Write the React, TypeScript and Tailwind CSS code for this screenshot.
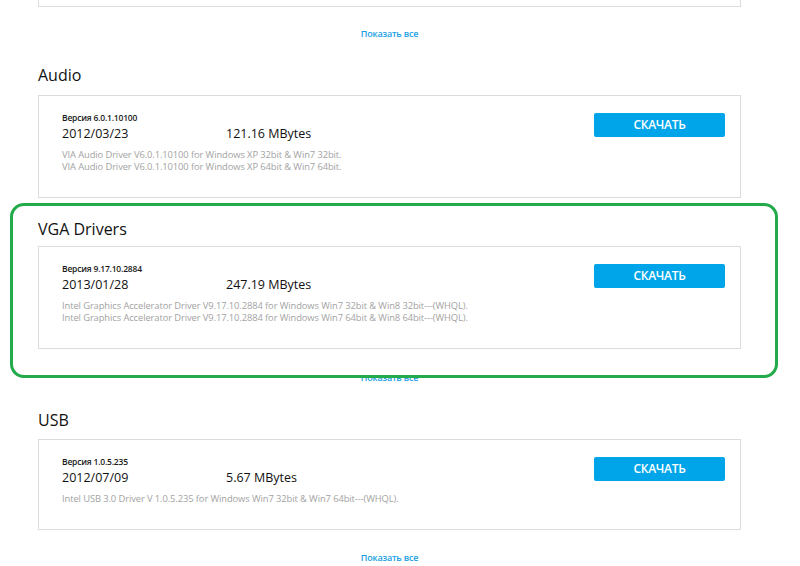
import React from "react";

type Driver = {
  version: string;
  date: string;
  size: string;
  desc: string[];
};

const font = { fontFamily: '"Open Sans", "Noto Sans", sans-serif' };

function ShowAll() {
  return (
    <div className="flex justify-center">
      <a className="text-[9px] leading-[14px] font-semibold text-[#19a0e3] tracking-[-0.2px] cursor-pointer">
        Показать все
      </a>
    </div>
  );
}

function DriverBox({ d }: { d: Driver }) {
  return (
    <div className="flex justify-between border border-[#dcdcdc] bg-white">
      <div className="pl-[23px] pt-[16px] pb-[24px]">
        <div className="text-[8.5px] leading-[12px] font-semibold text-[#1a1a1a] tracking-[-0.2px]">
          Версия {d.version}
        </div>
        <div className="mt-[2px] flex text-[12.5px] leading-[16px] text-[#111]">
          <span className="w-[164px]">{d.date}</span>
          <span>{d.size}</span>
        </div>
        <div className="mt-[7px] text-[9.4px] leading-[12px] text-[#a3a3a3] tracking-[-0.1px]">
          {d.desc.map((l, i) => (
            <div key={i}>{l}</div>
          ))}
        </div>
      </div>
      <div className="pt-[17px] pr-[15px]">
        <button className="w-[131px] h-[24px] rounded-[2px] bg-[#00a5e9] text-white text-[12px] font-semibold tracking-[-0.3px] flex items-center justify-center">
          СКАЧАТЬ
        </button>
      </div>
    </div>
  );
}

function Heading({ children }: { children: React.ReactNode }) {
  return <div className="text-[16px] leading-[22px] text-[#111]">{children}</div>;
}

export default function App() {
  const audio: Driver = {
    version: "6.0.1.10100",
    date: "2012/03/23",
    size: "121.16 MBytes",
    desc: [
      "VIA Audio Driver V6.0.1.10100 for Windows XP 32bit & Win7 32bit.",
      "VIA Audio Driver V6.0.1.10100 for Windows XP 64bit & Win7 64bit.",
    ],
  };
  const vga: Driver = {
    version: "9.17.10.2884",
    date: "2013/01/28",
    size: "247.19 MBytes",
    desc: [
      "Intel Graphics Accelerator Driver V9.17.10.2884 for Windows Win7 32bit & Win8 32bit---(WHQL).",
      "Intel Graphics Accelerator Driver V9.17.10.2884 for Windows Win7 64bit & Win8 64bit---(WHQL).",
    ],
  };
  const usb: Driver = {
    version: "1.0.5.235",
    date: "2012/07/09",
    size: "5.67 MBytes",
    desc: ["Intel USB 3.0 Driver V 1.0.5.235 for Windows Win7 32bit & Win7 64bit---(WHQL)."],
  };

  return (
    <div className="relative w-[800px] h-[566px] overflow-hidden bg-white" style={font}>
      <div className="ml-[38px] w-[703px] flex flex-col">
        <div className="h-[7px] border-x border-b border-[#dcdcdc]" />
        <div className="mt-[20px]">
          <ShowAll />
        </div>
        <div className="mt-[23px]">
          <Heading>Audio</Heading>
        </div>
        <div className="mt-[9px]">
          <DriverBox d={audio} />
        </div>
        <div className="mt-[20px]">
          <Heading>VGA Drivers</Heading>
        </div>
        <div className="mt-[6px]">
          <DriverBox d={vga} />
        </div>
        <div className="mt-[22px]">
          <ShowAll />
        </div>
        <div className="mt-[24px]">
          <Heading>USB</Heading>
        </div>
        <div className="mt-[8px]">
          <DriverBox d={usb} />
        </div>
        <div className="mt-[21px]">
          <ShowAll />
        </div>
      </div>
      <div className="pointer-events-none absolute left-[10px] top-[203px] w-[768px] h-[175px] rounded-[14px] border-[3px] border-[#22aa4b]" />
    </div>
  );
}
